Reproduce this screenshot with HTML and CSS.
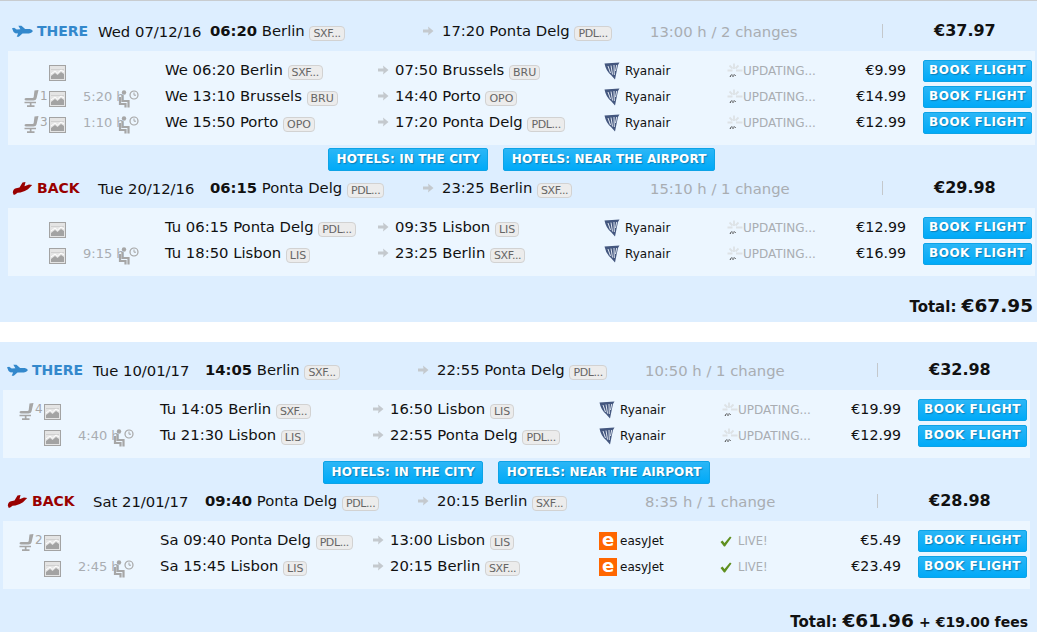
FILE: index.html
```html
<!DOCTYPE html>
<html lang="en">
<head>
    <meta charset="UTF-8">
    <title>Flight results</title>
    <link rel="stylesheet" href="styles.css">
</head>
<body>
    <svg class="icon-defs" width="0" height="0">
        <symbol id="plane" viewBox="0 0 20 11">
            <path d="M0 2.5 L2 2 L4.5 3.5 L8 3.3 L6 0 L9 0 L12.5 3 L17 3.2 Q20 4 19.8 5.2 Q18.5 7.2 14 7.5 L10 7.5 L6.5 10.5 L4.5 10.5 L5.8 7.5 Q2.5 7.5 1.5 6 Z" fill="currentColor"/>
        </symbol>
        <symbol id="plane-back" viewBox="0 0 20 13">
            <path d="M0.3 10.5 Q0.5 7 3.5 6.3 L7 5.5 L10 0.5 L13 0 L12 4.2 L16.5 2.6 L19.7 3 L15.5 7.3 Q11.5 10 8 10.4 L5 10.8 Q3 12.8 1.3 13 Z" fill="currentColor"/>
        </symbol>
        <symbol id="seat" viewBox="0 0 16 17">
            <path d="M10.5 0.5 L14.5 0 L12.5 8.5 Q12 10.5 9.5 10.5 L2.5 10.5 Q0.5 10.5 0.5 9.2 Q0.5 8 2.5 8 L8.5 8 Q9.5 8 9.7 7 Z M0.5 11.7 L12 11.7 L12 13.2 L7.5 13.2 L7.5 15.3 L10.5 15.3 L10.5 17 L3 17 L3 15.3 L5.8 15.3 L5.8 13.2 L0.5 13.2 Z" fill="currentColor"/>
        </symbol>
        <symbol id="noimg" viewBox="0 0 17 16">
            <rect x="0.5" y="0.5" width="16" height="15" fill="#e4e4e4" stroke="#a3a3a3"/>
            <path d="M2 4 H15 V5 H2 Z" fill="#d0d0d0"/>
            <path d="M2 11 L6 8 L8.5 10 L12 7 L15 9 L15 14 L2 14 Z" fill="#a3a3a3"/>
            <path d="M2 9 L6 6 L8.5 8 L12 5 L15 7" fill="none" stroke="#fff"/>
        </symbol>
        <symbol id="layover" viewBox="0 0 24 24">
            <circle cx="9" cy="8.5" r="2.2" fill="#a6a6a6"/>
            <path d="M7.5 11 L7.5 17 L13.5 17 L13.5 23.5 M5 13 L5 20 L10.5 20 L10.5 23.5" fill="none" stroke="#a6a6a6" stroke-width="2.2"/>
            <circle cx="19" cy="11" r="4" fill="#ecf6ff" stroke="#a6a6a6" stroke-width="1.2"/>
            <path d="M19 8.5 L19 11.2 L21 11.2" fill="none" stroke="#a6a6a6"/>
        </symbol>
        <symbol id="arrow" viewBox="0 0 11 10">
            <path d="M0 3.5 L5.5 3.5 L5 0.5 L10.5 5 L5 9.5 L5.5 6.5 L0 6.5 Z" fill="#c4c9ce"/>
        </symbol>
        <symbol id="harp" viewBox="0 0 16 18">
            <path d="M0.5 1.5 L15.5 0.5 L14 3 L12.5 10 L11 17.5 L7 13 Q2 9 0.5 1.5 Z" fill="#44577f"/>
            <path d="M4 4 L6.5 11 M7 3.5 L8.5 12.5 M10 3 L10.3 13 M12.7 3 L11.5 9" stroke="#dfe6f0" stroke-width="1"/>
        </symbol>
        <symbol id="spinner" viewBox="0 0 16 16">
            <path d="M7 0.5 V6 M2.5 2.5 L5.5 5.5 M11.5 2.5 L8.5 5.5 M0.5 7.5 H5.5 M9 7.5 H15.5" stroke="#dde2e6" stroke-width="1.8"/>
            <path d="M3 14 L4.5 11.5 M6 14 V11.5 M8.5 13 L7.5 11.5" stroke="#444" stroke-width="1"/>
        </symbol>
        <symbol id="check" viewBox="0 0 12 11">
            <path d="M0.5 6 L2.5 4.5 L4.5 7 L10 0.5 L11.5 1.5 L5 10.5 L4 10.5 Z" fill="#5f8f1f"/>
        </symbol>
    </svg>

    <div class="trip trip-first">
        <div class="leg-head">
            <span class="leg-dir there"><svg class="plane-ic"><use href="#plane"/></svg>THERE</span>
            <span>Wed 07/12/16</span>
            <span><b>06:20</b> Berlin <i class="code code-cut">SXF...</i></span>
            <svg class="arrow-ic"><use href="#arrow"/></svg>
            <span>17:20 Ponta Delg <i class="code code-cut">PDL...</i></span>
            <span class="leg-dur">13:00 h / 2 changes</span>
            <span class="leg-price">€37.97</span>
        </div>
        <div class="leg-panel">
            <div class="seg">
                <span class="seg-seat"></span>
                <svg class="noimg-ic"><use href="#noimg"/></svg>
                <span class="seg-wait"></span>
                <span>We 06:20 Berlin <i class="code code-cut">SXF...</i></span>
                <svg class="arrow-ic"><use href="#arrow"/></svg>
                <span>07:50 Brussels <i class="code">BRU</i></span>
                <span class="seg-air"><svg class="harp-ic"><use href="#harp"/></svg>Ryanair</span>
                <span class="seg-status"><svg class="spin-ic"><use href="#spinner"/></svg>UPDATING...</span>
                <span class="seg-price">€9.99</span>
                <a class="book-btn">BOOK FLIGHT</a>
            </div>
            <div class="seg">
                <span class="seg-seat"><svg class="seat-ic"><use href="#seat"/></svg>1</span>
                <svg class="noimg-ic"><use href="#noimg"/></svg>
                <span class="seg-wait">5:20 h<svg class="wait-ic"><use href="#layover"/></svg></span>
                <span>We 13:10 Brussels <i class="code">BRU</i></span>
                <svg class="arrow-ic"><use href="#arrow"/></svg>
                <span>14:40 Porto <i class="code">OPO</i></span>
                <span class="seg-air"><svg class="harp-ic"><use href="#harp"/></svg>Ryanair</span>
                <span class="seg-status"><svg class="spin-ic"><use href="#spinner"/></svg>UPDATING...</span>
                <span class="seg-price">€14.99</span>
                <a class="book-btn">BOOK FLIGHT</a>
            </div>
            <div class="seg">
                <span class="seg-seat"><svg class="seat-ic"><use href="#seat"/></svg>3</span>
                <svg class="noimg-ic"><use href="#noimg"/></svg>
                <span class="seg-wait">1:10 h<svg class="wait-ic"><use href="#layover"/></svg></span>
                <span>We 15:50 Porto <i class="code">OPO</i></span>
                <svg class="arrow-ic"><use href="#arrow"/></svg>
                <span>17:20 Ponta Delg <i class="code code-cut">PDL...</i></span>
                <span class="seg-air"><svg class="harp-ic"><use href="#harp"/></svg>Ryanair</span>
                <span class="seg-status"><svg class="spin-ic"><use href="#spinner"/></svg>UPDATING...</span>
                <span class="seg-price">€12.99</span>
                <a class="book-btn">BOOK FLIGHT</a>
            </div>
        </div>
        <div class="hotels">
            <a class="hotel-btn">HOTELS: IN THE CITY</a>
            <a class="hotel-btn">HOTELS: NEAR THE AIRPORT</a>
        </div>
        <div class="leg-head">
            <span class="leg-dir back"><svg class="plane-ic"><use href="#plane-back"/></svg>BACK</span>
            <span>Tue 20/12/16</span>
            <span><b>06:15</b> Ponta Delg <i class="code code-cut">PDL...</i></span>
            <svg class="arrow-ic"><use href="#arrow"/></svg>
            <span>23:25 Berlin <i class="code code-cut">SXF...</i></span>
            <span class="leg-dur">15:10 h / 1 change</span>
            <span class="leg-price">€29.98</span>
        </div>
        <div class="leg-panel">
            <div class="seg">
                <span class="seg-seat"></span>
                <svg class="noimg-ic"><use href="#noimg"/></svg>
                <span class="seg-wait"></span>
                <span>Tu 06:15 Ponta Delg <i class="code code-cut">PDL...</i></span>
                <svg class="arrow-ic"><use href="#arrow"/></svg>
                <span>09:35 Lisbon <i class="code">LIS</i></span>
                <span class="seg-air"><svg class="harp-ic"><use href="#harp"/></svg>Ryanair</span>
                <span class="seg-status"><svg class="spin-ic"><use href="#spinner"/></svg>UPDATING...</span>
                <span class="seg-price">€12.99</span>
                <a class="book-btn">BOOK FLIGHT</a>
            </div>
            <div class="seg">
                <span class="seg-seat"></span>
                <svg class="noimg-ic"><use href="#noimg"/></svg>
                <span class="seg-wait">9:15 h<svg class="wait-ic"><use href="#layover"/></svg></span>
                <span>Tu 18:50 Lisbon <i class="code">LIS</i></span>
                <svg class="arrow-ic"><use href="#arrow"/></svg>
                <span>23:25 Berlin <i class="code code-cut">SXF...</i></span>
                <span class="seg-air"><svg class="harp-ic"><use href="#harp"/></svg>Ryanair</span>
                <span class="seg-status"><svg class="spin-ic"><use href="#spinner"/></svg>UPDATING...</span>
                <span class="seg-price">€16.99</span>
                <a class="book-btn">BOOK FLIGHT</a>
            </div>
        </div>
        <div class="trip-total">Total: <b>€67.95</b></div>
    </div>

    <div class="trip trip-second">
        <div class="leg-head">
            <span class="leg-dir there"><svg class="plane-ic"><use href="#plane"/></svg>THERE</span>
            <span>Tue 10/01/17</span>
            <span><b>14:05</b> Berlin <i class="code code-cut">SXF...</i></span>
            <svg class="arrow-ic"><use href="#arrow"/></svg>
            <span>22:55 Ponta Delg <i class="code code-cut">PDL...</i></span>
            <span class="leg-dur">10:50 h / 1 change</span>
            <span class="leg-price">€32.98</span>
        </div>
        <div class="leg-panel">
            <div class="seg">
                <span class="seg-seat"><svg class="seat-ic"><use href="#seat"/></svg>4</span>
                <svg class="noimg-ic"><use href="#noimg"/></svg>
                <span class="seg-wait"></span>
                <span>Tu 14:05 Berlin <i class="code code-cut">SXF...</i></span>
                <svg class="arrow-ic"><use href="#arrow"/></svg>
                <span>16:50 Lisbon <i class="code">LIS</i></span>
                <span class="seg-air"><svg class="harp-ic"><use href="#harp"/></svg>Ryanair</span>
                <span class="seg-status"><svg class="spin-ic"><use href="#spinner"/></svg>UPDATING...</span>
                <span class="seg-price">€19.99</span>
                <a class="book-btn">BOOK FLIGHT</a>
            </div>
            <div class="seg">
                <span class="seg-seat"></span>
                <svg class="noimg-ic"><use href="#noimg"/></svg>
                <span class="seg-wait">4:40 h<svg class="wait-ic"><use href="#layover"/></svg></span>
                <span>Tu 21:30 Lisbon <i class="code">LIS</i></span>
                <svg class="arrow-ic"><use href="#arrow"/></svg>
                <span>22:55 Ponta Delg <i class="code code-cut">PDL...</i></span>
                <span class="seg-air"><svg class="harp-ic"><use href="#harp"/></svg>Ryanair</span>
                <span class="seg-status"><svg class="spin-ic"><use href="#spinner"/></svg>UPDATING...</span>
                <span class="seg-price">€12.99</span>
                <a class="book-btn">BOOK FLIGHT</a>
            </div>
        </div>
        <div class="hotels">
            <a class="hotel-btn">HOTELS: IN THE CITY</a>
            <a class="hotel-btn">HOTELS: NEAR THE AIRPORT</a>
        </div>
        <div class="leg-head">
            <span class="leg-dir back"><svg class="plane-ic"><use href="#plane-back"/></svg>BACK</span>
            <span>Sat 21/01/17</span>
            <span><b>09:40</b> Ponta Delg <i class="code code-cut">PDL...</i></span>
            <svg class="arrow-ic"><use href="#arrow"/></svg>
            <span>20:15 Berlin <i class="code code-cut">SXF...</i></span>
            <span class="leg-dur">8:35 h / 1 change</span>
            <span class="leg-price">€28.98</span>
        </div>
        <div class="leg-panel">
            <div class="seg">
                <span class="seg-seat"><svg class="seat-ic"><use href="#seat"/></svg>2</span>
                <svg class="noimg-ic"><use href="#noimg"/></svg>
                <span class="seg-wait"></span>
                <span>Sa 09:40 Ponta Delg <i class="code code-cut">PDL...</i></span>
                <svg class="arrow-ic"><use href="#arrow"/></svg>
                <span>13:00 Lisbon <i class="code">LIS</i></span>
                <span class="seg-air"><span class="easy-logo">e</span>easyJet</span>
                <span class="seg-status live"><svg class="check-ic"><use href="#check"/></svg>LIVE!</span>
                <span class="seg-price">€5.49</span>
                <a class="book-btn">BOOK FLIGHT</a>
            </div>
            <div class="seg">
                <span class="seg-seat"></span>
                <svg class="noimg-ic"><use href="#noimg"/></svg>
                <span class="seg-wait">2:45 h<svg class="wait-ic"><use href="#layover"/></svg></span>
                <span>Sa 15:45 Lisbon <i class="code">LIS</i></span>
                <svg class="arrow-ic"><use href="#arrow"/></svg>
                <span>20:15 Berlin <i class="code code-cut">SXF...</i></span>
                <span class="seg-air"><span class="easy-logo">e</span>easyJet</span>
                <span class="seg-status live"><svg class="check-ic"><use href="#check"/></svg>LIVE!</span>
                <span class="seg-price">€23.49</span>
                <a class="book-btn">BOOK FLIGHT</a>
            </div>
        </div>
        <div class="trip-total">Total: <b>€61.96</b> <span class="fees">+ €19.00 fees</span></div>
    </div>
</body>
</html>
```

FILE: styles.css
```css
* {
    margin: 0;
    padding: 0;
    box-sizing: border-box;
}
html, body {
    height: 632px;
    overflow: hidden;
}
body {
    background: #fff;
    color: #111;
    font-family: "DejaVu Sans", Verdana, sans-serif;
    font-size: 14.8px;
}
.icon-defs {
    position: absolute;
}
.trip {
    background: #ddeeff;
    margin-bottom: 20px;
    width: 1037px;
}
.trip-first {
    border-top: 1px solid #c8ccd0;
    padding: 15px 2px 0 8px;
}
.trip-second {
    padding: 13px 7px 0 3px;
}
.leg-head {
    display: grid;
    grid-template-columns: 90px 112px 213px 19px 208px 232px 153px;
    align-items: center;
    height: 30px;
    margin-bottom: 5px;
    white-space: nowrap;
}
.leg-dir {
    display: flex;
    align-items: center;
    padding-left: 4px;
    font-size: 14px;
    font-weight: bold;
}
.there { color: #3388cc; }
.back { color: #990000; }
.plane-ic {
    width: 21px;
    height: 13px;
    margin-right: 4px;
}
.leg-dur {
    color: #a9adb2;
}
.leg-price {
    height: 14px;
    line-height: 14px;
    padding-left: 51px;
    border-left: 1px solid #c4c8cc;
    font-size: 16px;
    font-weight: bold;
}
.arrow-ic {
    width: 11px;
    height: 10px;
}
.code {
    display: inline-block;
    padding: 0 3px;
    border: 1px solid #d2d2d2;
    border-radius: 4px;
    background: #ececec;
    color: #666;
    font-size: 11px;
    font-style: normal;
    line-height: 13px;
    vertical-align: -1px;
}
.code-cut {
    letter-spacing: -0.4px;
}
.leg-panel {
    background: #ecf6ff;
    padding: 6px 0 10px 16px;
}
.seg {
    display: grid;
    grid-template-columns: 25px 34px 82px 213px 17px 209px 123px 126px 53px 126px;
    align-items: center;
    height: 26px;
    white-space: nowrap;
}
.seg-seat {
    display: flex;
    margin-top: 4px;
    color: #a6a6a6;
    font-size: 12px;
    line-height: 12px;
}
.seat-ic {
    width: 16px;
    height: 17px;
    color: #a6a6a6;
}
.noimg-ic {
    width: 17px;
    height: 16px;
    margin-top: 6px;
}
.seg-wait {
    display: flex;
    align-items: center;
    color: #a9adb2;
    font-size: 13px;
}
.wait-ic {
    flex: none;
    width: 24px;
    height: 24px;
    margin-left: -10px;
}
.seg-air {
    display: flex;
    align-items: center;
    margin-top: 2px;
    font-size: 12px;
}
.harp-ic {
    width: 16px;
    height: 18px;
    margin-right: 5px;
}
.easy-logo {
    width: 18px;
    height: 18px;
    margin-right: 3px;
    background: #ff6600;
    color: #fff;
    font-size: 18px;
    font-weight: bold;
    line-height: 15px;
    text-align: center;
}
.seg-status {
    display: flex;
    align-items: center;
    margin-top: 2px;
    color: #a9adb2;
    font-size: 12px;
}
.spin-ic {
    width: 16px;
    height: 16px;
}
.check-ic {
    width: 12px;
    height: 11px;
    margin: 0 6px 0 -2px;
}
.live {
    font-size: 11.5px;
}
.seg-price {
    grid-column: 9;
    justify-self: end;
    font-size: 14.2px;
}
.book-btn, .hotel-btn {
    display: block;
    border: 1px solid #0ea3e6;
    border-radius: 2px;
    background: linear-gradient(#2bb6f6, #00aaf8);
    color: #fff;
    font-weight: bold;
    text-align: center;
    text-shadow: 1px 1px 1px #0a7fb8;
}
.book-btn {
    grid-column: 10;
    margin: 2px 0 0 17px;
    width: 109px;
    height: 22px;
    font-size: 12px;
    letter-spacing: 0.5px;
    line-height: 18px;
}
.hotels {
    display: flex;
    justify-content: center;
    gap: 15px;
    margin: 3px 0 2px;
}
.hotel-btn {
    padding: 0 7.5px;
    height: 23px;
    font-size: 12px;
    letter-spacing: 0.1px;
    line-height: 20px;
}
.trip-total {
    padding: 20px 2px 5px 0;
    font-size: 15px;
    font-weight: bold;
    line-height: 20px;
    text-align: right;
}
.trip-second .trip-total {
    padding-top: 22px;
}
.trip-total b {
    font-size: 18.5px;
}
.fees {
    font-size: 14px;
}
```
